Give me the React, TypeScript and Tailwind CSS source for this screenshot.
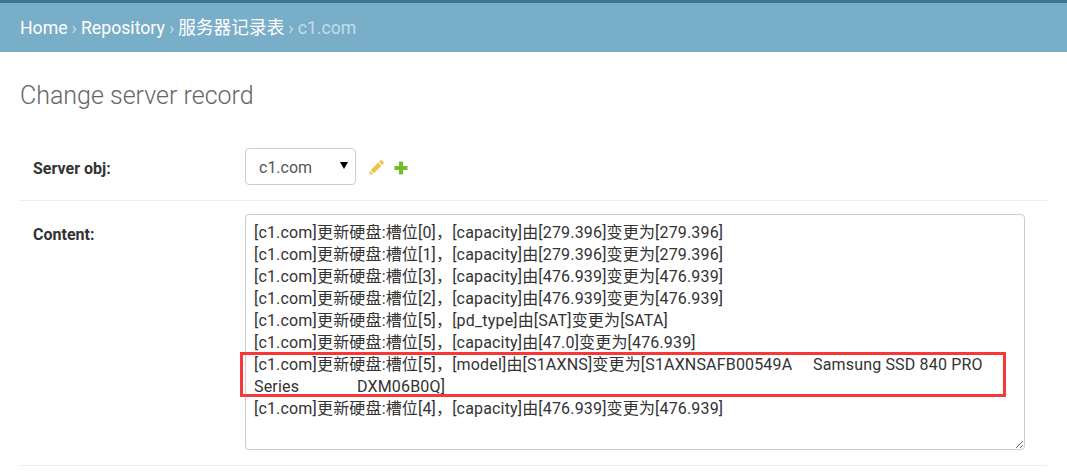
import React from 'react';

const lines = [
  '[c1.com]更新硬盘:槽位[0]，[capacity]由[279.396]变更为[279.396]',
  '[c1.com]更新硬盘:槽位[1]，[capacity]由[279.396]变更为[279.396]',
  '[c1.com]更新硬盘:槽位[3]，[capacity]由[476.939]变更为[476.939]',
  '[c1.com]更新硬盘:槽位[2]，[capacity]由[476.939]变更为[476.939]',
  '[c1.com]更新硬盘:槽位[5]，[pd_type]由[SAT]变更为[SATA]',
  '[c1.com]更新硬盘:槽位[5]，[capacity]由[47.0]变更为[476.939]',
  '[c1.com]更新硬盘:槽位[5]，[model]由[S1AXNS]变更为[S1AXNSAFB00549A     Samsung SSD 840 PRO Series              DXM06B0Q]',
  '[c1.com]更新硬盘:槽位[4]，[capacity]由[476.939]变更为[476.939]',
];

const fontClass = "font-['Roboto','Noto_Sans_CJK_SC',sans-serif]";

const App: React.FC = () => {
  return (
    <div className={`relative h-[474px] w-[1067px] overflow-hidden bg-white text-[16px] text-[#333] ${fontClass}`}>
      {/* breadcrumbs */}
      <div className="flex h-[52px] items-center gap-[4px] border-t-[3px] border-[#417690] bg-[#79aec8] px-[20px] pt-[2px] text-[17.7px] text-white">
        <a>Home</a>
        <span className="text-[#c4dce8]">›</span>
        <a>Repository</a>
        <span className="text-[#c4dce8]">›</span>
        <a>服务器记录表</a>
        <span className="text-[#c4dce8]">›</span>
        <span className="text-[#c4dce8]">c1.com</span>
      </div>

      <div className="px-[20px]">
        <h1 className="mt-[27px] text-[25px] leading-[33px] font-light text-[#666]">Change server record</h1>

        <div className="mt-[23px] flex h-[66px] items-center border-b border-[#eee] pl-[13px]">
          <label className="w-[212px] pt-[2px] font-bold">Server obj:</label>
          <div className="flex items-center">
            <div className="relative mb-[2px] flex h-[37px] w-[111px] items-center rounded-[4px] border border-[#ccc] pt-[2px] pl-[13px] text-[#555]">
              c1.com
              <span className="absolute top-[13px] right-[7px] h-0 w-0 border-x-[4px] border-t-[7px] border-x-transparent border-t-black" />
            </div>
            <svg className="ml-[13px]" width="15" height="15" viewBox="0 0 15 15">
              <path d="M11.4.4c.5-.4 1-.4 1.400 0l1.800 1.800c.4.4.4.9 0 1.400L13.200 5 10 1.800zM9.200 2.600l3.200 3.200L5 13.200 1.800 10zM1.200 10.800l3 3-3.700 1z" fill="#f0c24e" />
            </svg>
            <svg className="ml-[10px]" width="14" height="14" viewBox="0 0 14 14">
              <path d="M5 .5h4V5h4.500v4H9v4.500H5V9H.5V5H5z" fill="#70bf2b" />
            </svg>
          </div>
        </div>

        <div className="flex h-[265px] border-b border-[#eee] pt-[13px] pl-[13px]">
          <label className="w-[212px] pt-[10px] leading-[22px] font-bold">Content:</label>
          <textarea
            readOnly
            defaultValue={lines.join('\n')}
            className="h-[236px] w-[780px] rounded-[4px] border border-[#ccc] px-[8px] py-[7px] leading-[22px] tracking-[0.17px] whitespace-pre-wrap text-[#333] outline-none"
          />
        </div>
      </div>

      {/* red annotation round the model line */}
      <div className="pointer-events-none absolute top-[352px] left-[240px] h-[45px] w-[766px] border-[3px] border-[#f73838]" />
    </div>
  );
};

export default App;
